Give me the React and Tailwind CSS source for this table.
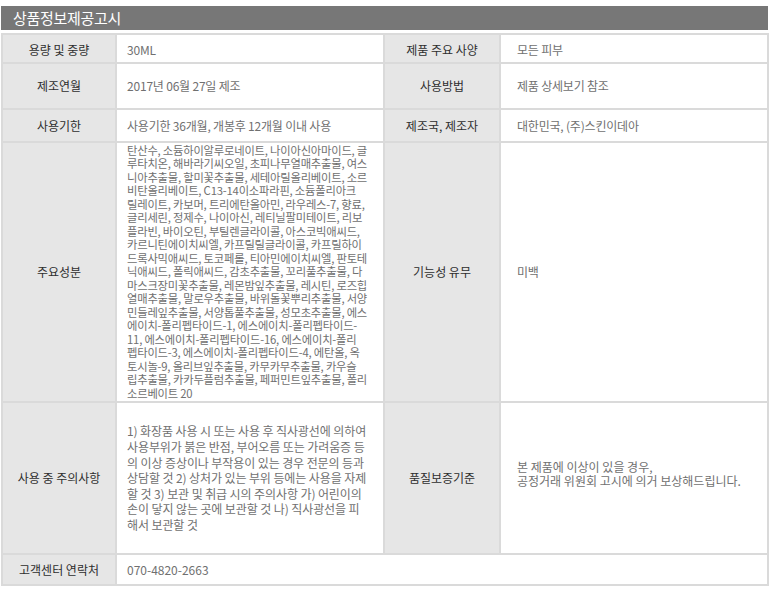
import { Fragment } from 'react';

const ingredients = [
  '탄산수, 소듐하이알루로네이트, 나이아신아마이드, 글',
  '루타치온, 해바라기씨오일, 초피나무열매추출물, 여스',
  '니아추출물, 할미꽃추출물, 세테아릴올리베이트, 소르',
  '비탄올리베이트, C13-14이소파라핀, 소듐폴리아크',
  '릴레이트, 카보머, 트리에탄올아민, 라우레스-7, 향료,',
  '글리세린, 정제수, 나이아신, 레티닐팔미테이트, 리보',
  '플라빈, 바이오틴, 부틸렌글라이콜, 아스코빅애씨드,',
  '카르니틴에이치씨엘, 카프릴릴글라이콜, 카프릴하이',
  '드록사믹애씨드, 토코페롤, 티아민에이치씨엘, 판토테',
  '닉애씨드, 폴릭애씨드, 감초추출물, 꼬리풀추출물, 다',
  '마스크장미꽃추출물, 레몬밤잎추출물, 레시틴, 로즈힙',
  '열매추출물, 말로우추출물, 바위돌꽃뿌리추출물, 서양',
  '민들레잎추출물, 서양톱풀추출물, 성모초추출물, 에스',
  '에이치-폴리펩타이드-1, 에스에이치-폴리펩타이드-',
  '11, 에스에이치-폴리펩타이드-16, 에스에이치-폴리',
  '펩타이드-3, 에스에이치-폴리펩타이드-4, 에탄올, 옥',
  '토시놀-9, 올리브잎추출물, 카무카무추출물, 카우슬',
  '립추출물, 카카두플럼추출물, 페퍼민트잎추출물, 폴리',
  '소르베이트 20',
];

const cautions = [
  '1) 화장품 사용 시 또는 사용 후 직사광선에 의하여',
  '사용부위가 붉은 반점, 부어오름 또는 가려움증 등',
  '의 이상 증상이나 부작용이 있는 경우 전문의 등과',
  '상담할 것 2) 상처가 있는 부위 등에는 사용을 자제',
  '할 것 3) 보관 및 취급 시의 주의사항 가) 어린이의',
  '손이 닿지 않는 곳에 보관할 것 나) 직사광선을 피',
  '해서 보관할 것',
];

// keeps the original line breaks of the notice
function Lines({ lines }) {
  return lines.map((line, i) => (
    <Fragment key={i}>
      {line}
      {i < lines.length - 1 && <br />}
    </Fragment>
  ));
}

function Label({ children, top }) {
  return (
    <div className={`flex items-center justify-center bg-[#e6e6e6] text-[12px] text-[#2e2e2e] ${top ? 'pt-[3px]' : ''}`}>
      {children}
    </div>
  );
}

function Value({ children, right, top }) {
  return (
    <div className={`flex items-center bg-white text-[12px] text-[#707070] tracking-[-0.2px] ${right ? 'pl-[16px]' : 'pl-[10px]'} ${top ? 'pt-[3px]' : ''}`}>
      {children}
    </div>
  );
}

export default function App() {
  return (
    <div className="w-[770px] h-[593px] bg-white font-['Noto_Sans_CJK_KR',sans-serif] pt-[6px]">
      {/* title bar */}
      <div className="ml-[1px] w-[767px] h-[24px] bg-[#777777] flex items-center pl-[12px] text-[15px] text-white tracking-[-0.3px]">
        상품정보제공고시
      </div>

      {/* info table */}
      <div className="mt-[3px] ml-[1px] w-[768px] p-[2px] bg-[#dadada] grid grid-cols-[112px_266px_114px_266px] grid-rows-[27px_44px_31px_258px_150px_29px] gap-[2px]">
        <Label top>용량 및 중량</Label>
        <Value top>30ML</Value>
        <Label top>제품 주요 사양</Label>
        <Value right top>모든 피부</Value>

        <Label>제조연월</Label>
        <Value>2017년 06월 27일 제조</Value>
        <Label>사용방법</Label>
        <Value right>제품 상세보기 참조</Value>

        <Label>사용기한</Label>
        <Value>사용기한 36개월, 개봉후 12개월 이내 사용</Value>
        <Label>제조국, 제조자</Label>
        <Value right>대한민국, (주)스킨이데아</Value>

        <Label>주요성분</Label>
        <div className="flex items-center bg-white pl-[10px]">
          <div className="whitespace-nowrap text-[11.3px] leading-[13.5px] text-[#707070] tracking-[-0.2px]">
            <Lines lines={ingredients} />
          </div>
        </div>
        <Label>기능성 유무</Label>
        <Value right>미백</Value>

        <Label>사용 중 주의사항</Label>
        <div className="flex items-center bg-white pl-[10px]">
          <div className="whitespace-nowrap text-[12px] leading-[15.6px] text-[#707070] tracking-[-0.1px]">
            <Lines lines={cautions} />
          </div>
        </div>
        <Label>품질보증기준</Label>
        <div className="flex items-center bg-white pl-[16px] pb-[8px]">
          <div className="whitespace-nowrap text-[12px] leading-[14px] text-[#707070]">
            본 제품에 이상이 있을 경우,
            <br />
            공정거래 위원회 고시에 의거 보상해드립니다.
          </div>
        </div>

        <Label>고객센터 연락처</Label>
        <div className="col-span-3 flex items-center bg-white pl-[10px] text-[12px] text-[#707070]">
          070-4820-2663
        </div>
      </div>
    </div>
  );
}
